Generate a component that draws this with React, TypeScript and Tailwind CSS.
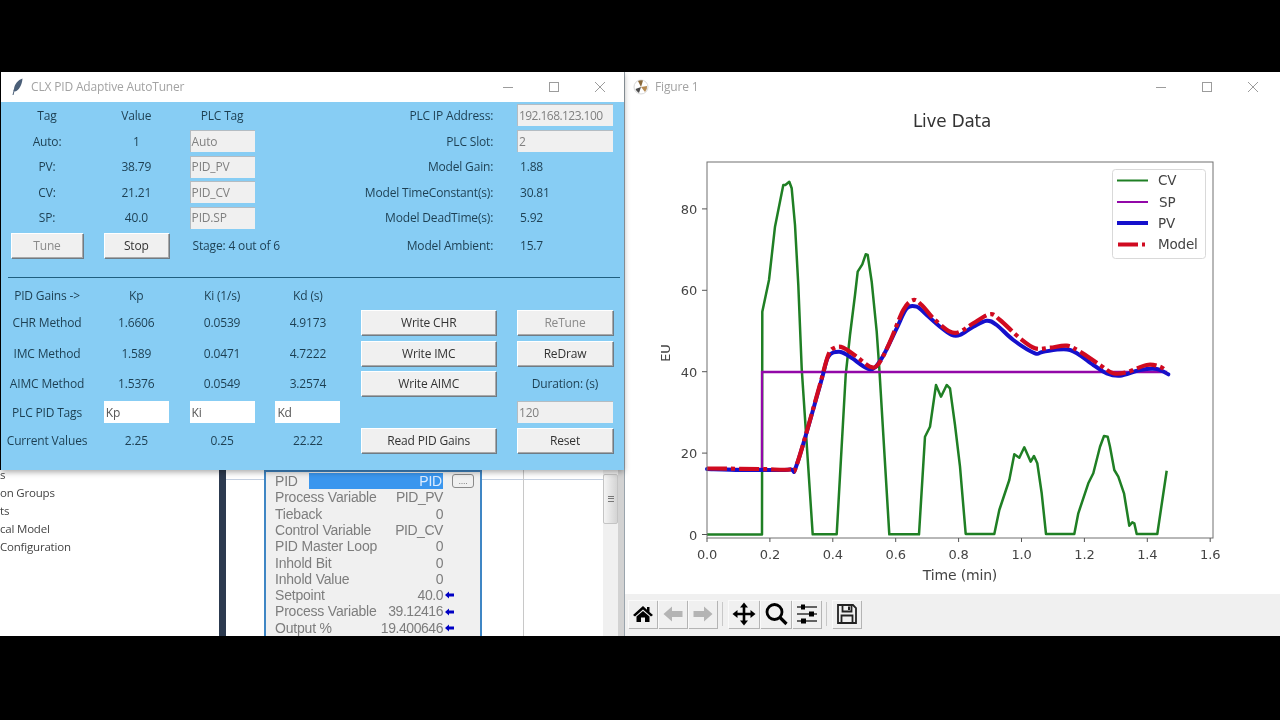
import type { ReactNode } from "react";

const ui = "font-['Open_Sans','Noto_Sans',sans-serif] tracking-[-0.17px]";

const cvLine =
  "707,534.5 762,534.5 762.3,311.7 769,280 775,226.7 783.3,185 785.3,185 789.3,181.7 791.7,188.3 795,225 798.3,285 801.7,368.3 812.7,534.3 836.7,534.3 845.7,375 850,335 855,295 857.7,271.7 862.3,264.3 865.7,254.3 867.7,255 871.7,281.7 876.7,331.7 879.3,368.3 889.3,534.3 919,534.3 925,436.7 930,426.7 936,385 941,396.7 946.7,385 950,388.3 955,425 960,466.7 965.7,534 994.3,534 999.3,510 1009.3,480 1014.3,454.3 1019.3,457.7 1024.3,447.3 1030.7,461.7 1034,456 1037.3,463.3 1041.7,493.3 1046,534 1074.3,534 1078.3,513.3 1088.3,483.3 1093.3,473.3 1100,446.7 1104,436 1107.7,436.7 1110,446.7 1114.3,470 1118.3,476.7 1124,493.3 1129.3,525.7 1132.3,522.3 1134.3,523.3 1136.7,534 1157.3,534 1166.7,470.7";
const spLine = "707,469 762,469 762,372 1167,372";
const pvLine =
  "707,469 740,470 762,470 790,469.5 797,464 820.7,383 828.3,356.7 839.3,351.7 850,356.7 870,369.3 881.7,358.3 896.7,328.3 906.7,308.3 916.7,306.7 926.7,315 940,326.7 951.7,335 960,335 973.3,326.7 986.7,320.7 996.7,325 1013.3,340 1035,353.3 1043.3,351.7 1070,350 1093.3,365 1106.7,373.3 1120,375.7 1140,370 1156.7,369 1168.3,374.3";
const modelLine =
  "707,468.5 760,469 790,469.5 797,464 819,388 828.3,355 835,347.7 843.3,347.7 856.7,356.7 870,366.7 878.3,364.3 890,341.7 903.3,310 913.3,300 921.7,305 933.3,318.3 950,331.7 960,331.7 973.3,323.3 990,314.3 1000,320 1020,338.3 1035,348.3 1050,347.7 1066.7,345.7 1080,351.7 1100,365 1113.3,373.3 1126.7,372.3 1146.7,365 1160,366.7 1166.7,371.7";

// catmull-rom through the picked points, PV and Model are smooth curves
function smooth(line: string) {
  const p = line.split(" ").map((s) => s.split(",").map(Number));
  let d = `M${p[0][0]} ${p[0][1]}`;
  for (let i = 0; i < p.length - 1; i++) {
    const a = p[Math.max(i - 1, 0)];
    const b = p[i];
    const c = p[i + 1];
    const e = p[Math.min(i + 2, p.length - 1)];
    const c1x = b[0] + (c[0] - a[0]) / 6;
    const c1y = b[1] + (c[1] - a[1]) / 6;
    const c2x = c[0] - (e[0] - b[0]) / 6;
    const c2y = c[1] - (e[1] - b[1]) / 6;
    d += ` C${c1x} ${c1y} ${c2x} ${c2y} ${c[0]} ${c[1]}`;
  }
  return d;
}

const xTicks = ["0.0", "0.2", "0.4", "0.6", "0.8", "1.0", "1.2", "1.4", "1.6"];
const yTicks = [0, 20, 40, 60, 80];

const popupRows = [
  { name: "Process Variable", value: "PID_PV" },
  { name: "Tieback", value: "0" },
  { name: "Control Variable", value: "PID_CV" },
  { name: "PID Master Loop", value: "0" },
  { name: "Inhold Bit", value: "0" },
  { name: "Inhold Value", value: "0" },
  { name: "Setpoint", value: "40.0", live: true },
  { name: "Process Variable", value: "39.12416", live: true },
  { name: "Output %", value: "19.400646", live: true },
];

function Txt({ children, className = "" }: { children: ReactNode; className?: string }) {
  return (
    <div className={`flex items-center whitespace-nowrap pt-px text-[12px] text-[#1d3f52] ${className || "justify-center"}`}>
      {children}
    </div>
  );
}

function Field({ value, white = false, className = "" }: { value: string; white?: boolean; className?: string }) {
  return (
    <div className="flex items-center">
      <div
        className={`flex h-[22px] w-full items-center pl-[2px] pt-px text-[12px] ${
          white
            ? "bg-white text-[#555]"
            : "bg-[#f0f0f0] text-[#808080] shadow-[inset_1px_1px_0_#b4bcc2]"
        } ${className}`}
      >
        {value}
      </div>
    </div>
  );
}

function TkButton({ label, disabled = false }: { label: string; disabled?: boolean }) {
  return (
    <div className="flex items-center">
      <div
        className={`flex h-[25px] w-full items-center justify-center bg-[#f0f0f0] pt-px text-[12px] shadow-[inset_1px_1px_0_#fff,inset_-1px_-1px_0_#a9a9a9,1px_1px_0_#6f7b84] ${
          disabled ? "text-[#8a8a8a]" : "text-[#333]"
        }`}
      >
        {label}
      </div>
    </div>
  );
}

function WindowButtons() {
  return (
    <div className="ml-auto flex items-center pr-px">
      <div className="flex w-[46px] justify-center">
        <svg width="12" height="12" viewBox="0 0 12 12">
          <path d="M1 6.5 H11" stroke="#9c9c9c" />
        </svg>
      </div>
      <div className="flex w-[46px] justify-center">
        <svg width="12" height="12" viewBox="0 0 12 12">
          <rect x="1.5" y="1.5" width="9" height="9" fill="none" stroke="#9c9c9c" />
        </svg>
      </div>
      <div className="flex w-[46px] justify-center">
        <svg width="12" height="12" viewBox="0 0 12 12">
          <path d="M1 1 L11 11 M11 1 L1 11" stroke="#9c9c9c" />
        </svg>
      </div>
    </div>
  );
}

function ToolButton({ children, wide = false }: { children: ReactNode; wide?: boolean }) {
  return (
    <div
      className={`flex h-[28px] items-center justify-center shadow-[inset_1px_1px_0_#fafafa,1px_1px_0_#b4b4b4] ${
        wide ? "w-[31px]" : "w-[29px]"
      }`}
    >
      {children}
    </div>
  );
}

function ToolSep() {
  return <div className="mx-[5px] h-[24px] w-px bg-[#c8c8c8]" />;
}

function LiveArrow() {
  return (
    <svg width="9" height="8" viewBox="0 0 9 8">
      <path d="M0 4 L4 0.5 V2.6 H9 V5.4 H4 V7.5 Z" fill="#0000c4" />
    </svg>
  );
}

function Chart() {
  return (
    <svg viewBox="625 102 655 492" className="block h-[492px] w-[655px] bg-white">
      <text x="952" y="126.5" textAnchor="middle" fontSize="16.8" fill="#333" fontFamily="DejaVu Sans">
        Live Data
      </text>

      <polyline points={cvLine} fill="none" stroke="#1f7f24" strokeWidth="2.5" strokeLinejoin="round" />
      <polyline points={spLine} fill="none" stroke="#9208a8" strokeWidth="2.3" />
      <path d={smooth(pvLine)} fill="none" stroke="#1510cc" strokeWidth="4" strokeLinejoin="round" strokeLinecap="round" />
      <path d={smooth(modelLine)} fill="none" stroke="#d00a20" strokeWidth="4.2" strokeLinejoin="round" strokeDasharray="20 4 4 4" />

      <rect x="707" y="162" width="506" height="376" fill="none" stroke="#707070" strokeWidth="1" />

      {xTicks.map((t, i) => {
        const x = 707 + i * 62.9;
        return (
          <g key={t}>
            <line x1={x} x2={x} y1="538" y2="542" stroke="#555" />
            <text x={x} y="559" textAnchor="middle" fontSize="13" fill="#444" fontFamily="DejaVu Sans">
              {t}
            </text>
          </g>
        );
      })}
      {yTicks.map((v) => {
        const y = 534.5 - v * 4.07;
        return (
          <g key={v}>
            <line x1="702" x2="707" y1={y} y2={y} stroke="#555" />
            <text x="697" y={y + 5} textAnchor="end" fontSize="13" fill="#444" fontFamily="DejaVu Sans">
              {v}
            </text>
          </g>
        );
      })}

      <text x="960" y="580" textAnchor="middle" fontSize="14" fill="#444" fontFamily="DejaVu Sans">
        Time (min)
      </text>
      <text
        x="0"
        y="0"
        transform="translate(670 353) rotate(-90)"
        textAnchor="middle"
        fontSize="13"
        fill="#444"
        fontFamily="DejaVu Sans"
      >
        EU
      </text>

      {/* legend */}
      <rect x="1112.5" y="169.5" width="93" height="89" rx="3" fill="#fff" fillOpacity="0.85" stroke="#d9d9d9" />
      <line x1="1117" x2="1148" y1="180.5" y2="180.5" stroke="#1f7f24" strokeWidth="2" />
      <line x1="1117" x2="1148" y1="202" y2="202" stroke="#9208a8" strokeWidth="2" />
      <line x1="1117" x2="1148" y1="223" y2="223" stroke="#1510cc" strokeWidth="4" />
      <line x1="1118" x2="1148" y1="244.5" y2="244.5" stroke="#d00a20" strokeWidth="4" strokeDasharray="20 4 3 4" />
      <g fontSize="13.5" fill="#444" fontFamily="DejaVu Sans">
        <text x="1158" y="185">CV</text>
        <text x="1159" y="206.5">SP</text>
        <text x="1158" y="228">PV</text>
        <text x="1158" y="249">Model</text>
      </g>
    </svg>
  );
}

export default function App() {
  return (
    <div className={`h-[720px] w-[1280px] overflow-hidden bg-black pt-[72px] blur-[0.5px] ${ui}`}>
      <div className="flex h-[564px]">
        {/* left column */}
        <div className="flex w-[624px] flex-col">
          {/* tuner window */}
          <div className="relative z-10 ml-px flex h-[399px] flex-col bg-[#87cdf4] shadow-[0_2px_6px_rgba(0,0,0,0.35)]">
            <div className="flex h-[30px] shrink-0 items-center bg-white pl-[11px]">
              <svg width="12" height="18" viewBox="0 0 12 18">
                <path d="M10.5 0.5 C6 2 2.5 6 2 11 L1.5 13 L3 13.5 C7 12.5 10 7 10.5 0.5Z" fill="#4b5f78" />
                <path d="M2.5 11 L1 17" stroke="#4b5f78" strokeWidth="1" />
              </svg>
              <span className="ml-[7px] text-[12px] text-[#a3a3a3]">CLX PID Adaptive AutoTuner</span>
              <WindowButtons />
            </div>

            {/* live values */}
            <div className="grid grid-cols-[72px_65px_65px_65px_135px_96px] grid-rows-[26px_26px_25px_26px_25px_30px] gap-x-[20.8px] pl-[10px]">
              <Txt>Tag</Txt>
              <Txt>Value</Txt>
              <Txt>PLC Tag</Txt>
              <div />
              <Txt className="justify-end pr-[3px]">PLC IP Address:</Txt>
              <Field value="192.168.123.100" className="tracking-[-0.55px]" />

              <Txt>Auto:</Txt>
              <Txt>1</Txt>
              <Field value="Auto" />
              <div />
              <Txt className="justify-end pr-[3px]">PLC Slot:</Txt>
              <Field value="2" />

              <Txt>PV:</Txt>
              <Txt>38.79</Txt>
              <Field value="PID_PV" />
              <div />
              <Txt className="justify-end pr-[3px]">Model Gain:</Txt>
              <Txt className="justify-start pl-[3px]">1.88</Txt>

              <Txt>CV:</Txt>
              <Txt>21.21</Txt>
              <Field value="PID_CV" />
              <div />
              <Txt className="justify-end pr-[3px]">Model TimeConstant(s):</Txt>
              <Txt className="justify-start pl-[3px]">30.81</Txt>

              <Txt>SP:</Txt>
              <Txt>40.0</Txt>
              <Field value="PID.SP" />
              <div />
              <Txt className="justify-end pr-[3px]">Model DeadTime(s):</Txt>
              <Txt className="justify-start pl-[3px]">5.92</Txt>

              <TkButton label="Tune" disabled />
              <TkButton label="Stop" />
              <Txt className="col-span-2 justify-start pl-[3px]">Stage: 4 out of 6</Txt>
              <Txt className="justify-end pr-[3px]">Model Ambient:</Txt>
              <Txt className="justify-start pl-[3px]">15.7</Txt>
            </div>

            <div className="mt-[17px] ml-[7px] h-px w-[612px] bg-[#1f5f80]" />

            {/* gains */}
            <div className="mt-[5px] grid grid-cols-[72px_65px_65px_65px_135px_96px] grid-rows-[24px_31px_30px_30px_28px_28px] gap-x-[20.8px] pl-[10px]">
              <Txt>PID Gains -&gt;</Txt>
              <Txt>Kp</Txt>
              <Txt>Ki (1/s)</Txt>
              <Txt>Kd (s)</Txt>
              <div />
              <div />

              <Txt>CHR Method</Txt>
              <Txt>1.6606</Txt>
              <Txt>0.0539</Txt>
              <Txt>4.9173</Txt>
              <TkButton label="Write CHR" />
              <TkButton label="ReTune" disabled />

              <Txt>IMC Method</Txt>
              <Txt>1.589</Txt>
              <Txt>0.0471</Txt>
              <Txt>4.7222</Txt>
              <TkButton label="Write IMC" />
              <TkButton label="ReDraw" />

              <Txt>AIMC Method</Txt>
              <Txt>1.5376</Txt>
              <Txt>0.0549</Txt>
              <Txt>3.2574</Txt>
              <TkButton label="Write AIMC" />
              <Txt>Duration: (s)</Txt>

              <Txt>PLC PID Tags</Txt>
              <Field value="Kp" white />
              <Field value="Ki" white />
              <Field value="Kd" white />
              <div />
              <Field value="120" />

              <Txt>Current Values</Txt>
              <Txt>2.25</Txt>
              <Txt>0.25</Txt>
              <Txt>22.22</Txt>
              <TkButton label="Read PID Gains" />
              <TkButton label="Reset" />
            </div>
          </div>

          {/* logix designer behind the tuner */}
          <div className="flex flex-1 bg-white">
            <div className="w-[219px] shrink-0 text-[11.5px] leading-[18.3px] tracking-[-0.2px] text-[#444]">
              <div className="h-[14px] leading-[9px]">s</div>
              <div>on Groups</div>
              <div>ts</div>
              <div>cal Model</div>
              <div>Configuration</div>
            </div>
            <div className="w-[7px] shrink-0 bg-[#2c3a4f]" />
            <div className="w-[38px] shrink-0">
              <div className="mt-[9px] h-px bg-[#c3cfe0]" />
            </div>

            {/* PID properties popup */}
            <div className="w-[218px] shrink-0 border-2 border-b-0 border-[#3f86c4] bg-[#f0f0f0] pt-[1.5px] font-['Liberation_Sans',Arial,sans-serif] text-[14px] leading-[16.3px] tracking-[-0.2px] text-[#7d7d7d]">
              <div className="flex items-center pl-[9px]">
                <span className="w-[34px]">PID</span>
                <span className="w-[134px] bg-[#3a96ee] pr-px text-right text-[#dcecff]">PID</span>
                <span className="ml-[9px] flex h-[14px] w-[22px] items-center justify-center rounded-[3px] border border-[#8a8a8a] text-[9px] leading-[9px]">
                  ....
                </span>
              </div>
              {popupRows.map((r) => (
                <div key={r.name + r.value} className="flex items-center pl-[9px]">
                  <span className="whitespace-nowrap">{r.name}</span>
                  <span className="ml-auto whitespace-nowrap tracking-[-0.45px]">{r.value}</span>
                  <span className="flex w-[37px] items-center pl-[2px]">{r.live ? <LiveArrow /> : null}</span>
                </div>
              ))}
            </div>

            <div className="flex flex-1">
              <div className="w-[41px] shrink-0">
                <div className="mt-[9px] h-px bg-[#c3cfe0]" />
              </div>
              <div className="w-px shrink-0 bg-[#c8c8c8]" />
              <div className="flex-1">
                <div className="mt-[9px] h-px bg-[#c3cfe0]" />
              </div>
            </div>

            {/* scrollbar */}
            <div className="w-[15px] shrink-0 bg-[#f0f0f0] pt-[4px]">
              <div className="flex h-[50px] items-center justify-center rounded-[2px] border border-[#c4c4c4] bg-gradient-to-r from-[#f4f4f4] to-[#d4d4d4]">
                <div className="h-[6px] w-[6px] border-y border-[#777]">
                  <div className="mt-[1.5px] h-px bg-[#777]" />
                </div>
              </div>
            </div>
            <div className="w-[6px] shrink-0 bg-[#d2d2d2]" />
          </div>
        </div>

        {/* figure window */}
        <div className="flex w-[656px] flex-col border-l border-[#9aa4ac] bg-white">
          <div className="flex h-[30px] shrink-0 items-center pr-[3px] pl-[8px]">
            <svg width="16" height="18" viewBox="0 0 16 18">
              <circle cx="8" cy="9" r="7" fill="none" stroke="#d8d8d8" strokeWidth="1" />
              <path d="M8 9 L5 3 A7 7 0 0 1 10 2.5Z" fill="#8a6a3c" />
              <path d="M8 9 L14 8 A7 7 0 0 1 12 14Z" fill="#b58a52" />
              <path d="M8 9 L6 15 A7 7 0 0 1 2.5 11Z" fill="#4a4a4a" />
            </svg>
            <span className="ml-[6px] text-[12px] text-[#a3a3a3]">Figure 1</span>
            <WindowButtons />
          </div>

          <Chart />

          {/* matplotlib toolbar */}
          <div className="flex flex-1 items-center bg-[#f0f0f0] pb-[2px] pl-[3px]">
            <ToolButton>
              <svg width="22" height="18" viewBox="0 0 22 18">
                <path d="M11 1 L1 10 L3 11.5 L11 4.5 L19 11.5 L21 10 L17.5 7 V2 H15 V4.8Z" fill="#000" />
                <path d="M4.5 11.5 L11 6 L17.5 11.5 V17 H13 V12.5 H9 V17 H4.5Z" fill="#000" />
              </svg>
            </ToolButton>
            <div className="w-px" />
            <ToolButton>
              <svg width="20" height="18" viewBox="0 0 20 18">
                <path d="M0.5 9 L9 1.5 V6 H19.5 V12 H9 V16.5Z" fill="#b4b4b4" />
              </svg>
            </ToolButton>
            <div className="w-px" />
            <ToolButton>
              <svg width="20" height="18" viewBox="0 0 20 18">
                <path d="M19.5 9 L11 1.5 V6 H0.5 V12 H11 V16.5Z" fill="#b4b4b4" />
              </svg>
            </ToolButton>
            <ToolSep />
            <ToolButton wide>
              <svg width="24" height="24" viewBox="0 0 24 24">
                <path d="M12 3 V21 M3 12 H21" stroke="#000" strokeWidth="2.6" />
                <path d="M12 0.5 L16 5.5 H8Z M12 23.5 L16 18.5 H8Z M0.5 12 L5.5 8 V16Z M23.5 12 L18.5 8 V16Z" fill="#000" />
              </svg>
            </ToolButton>
            <div className="w-px" />
            <ToolButton wide>
              <svg width="24" height="24" viewBox="0 0 24 24">
                <circle cx="10.5" cy="10" r="7.5" fill="none" stroke="#000" strokeWidth="2.8" />
                <path d="M16 15.5 L22.5 22" stroke="#000" strokeWidth="3.2" />
              </svg>
            </ToolButton>
            <div className="w-px" />
            <ToolButton>
              <svg width="22" height="22" viewBox="0 0 22 22">
                <path d="M1 4 H21 M1 11 H21 M1 18 H21" stroke="#333" strokeWidth="1.6" />
                <rect x="5" y="1.5" width="4" height="5" fill="#000" />
                <rect x="13" y="8.5" width="5" height="5" fill="#000" />
                <rect x="5" y="15.5" width="5" height="5" fill="#000" />
              </svg>
            </ToolButton>
            <ToolSep />
            <ToolButton>
              <svg width="22" height="22" viewBox="0 0 22 22">
                <path
                  d="M2 2 H17 L20 5 V20 H2Z M6.5 2 V8.5 H15.5 V2 M5.5 20 V12.5 H16.5 V20"
                  fill="none"
                  stroke="#222"
                  strokeWidth="1.8"
                />
                <rect x="12" y="3.5" width="2" height="3.5" fill="#222" />
              </svg>
            </ToolButton>
          </div>
        </div>
      </div>
    </div>
  );
}
